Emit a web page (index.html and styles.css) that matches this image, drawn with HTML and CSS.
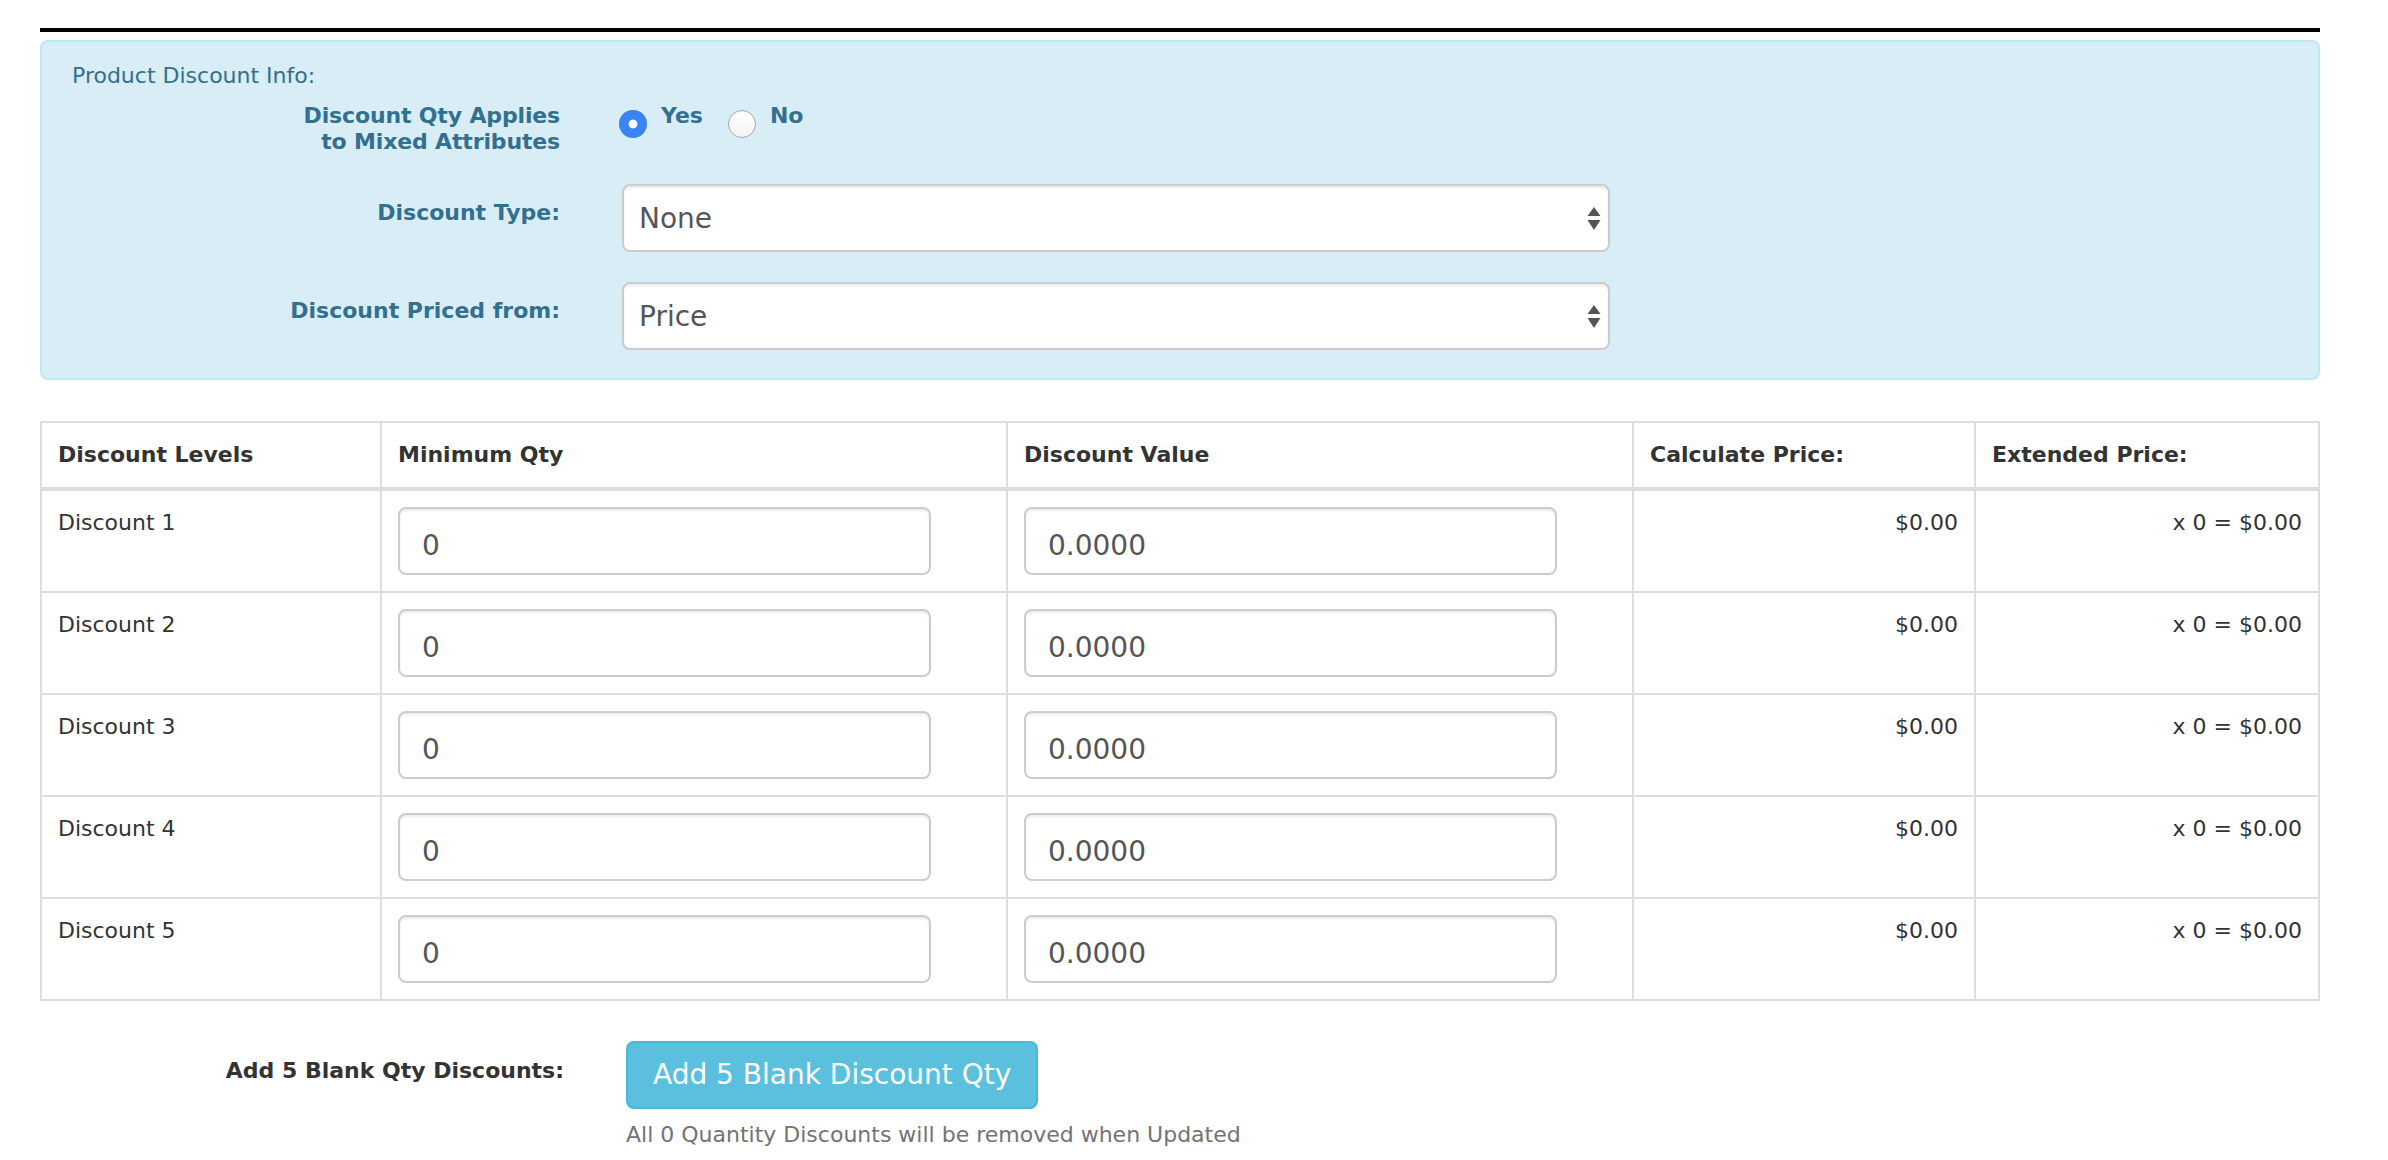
FILE: index.html
```html
<!DOCTYPE html>
<html lang="en">
<head>
<meta charset="utf-8">
<title>Product Discount Info</title>
<link rel="stylesheet" href="styles.css">
</head>
<body>
<div class="page">
  <div class="rule"></div>

  <div class="info-panel">
    <div class="panel-title">Product Discount Info:</div>

    <div class="form-row row-mixed">
      <div class="form-label label-two-line">Discount Qty Applies<br>to Mixed Attributes</div>
      <div class="radios">
        <label class="radio-opt"><input type="radio" name="mixed" checked><span>Yes</span></label>
        <label class="radio-opt"><input type="radio" name="mixed"><span>No</span></label>
      </div>
    </div>

    <div class="form-row">
      <div class="form-label">Discount Type:</div>
      <div class="select-wrap">
        <select class="select-box"><option>None</option></select>
        <svg class="select-arrows" width="14" height="24" viewBox="0 0 14 24"><path d="M7 0 L13.5 9 L0.5 9 Z" fill="#555"/><path d="M0.5 13 L13.5 13 L7 23 Z" fill="#555"/></svg>
      </div>
    </div>

    <div class="form-row row-last">
      <div class="form-label">Discount Priced from:</div>
      <div class="select-wrap">
        <select class="select-box"><option>Price</option></select>
        <svg class="select-arrows" width="14" height="24" viewBox="0 0 14 24"><path d="M7 0 L13.5 9 L0.5 9 Z" fill="#555"/><path d="M0.5 13 L13.5 13 L7 23 Z" fill="#555"/></svg>
      </div>
    </div>
  </div>

  <table class="discount-table">
    <colgroup>
      <col class="col-level">
      <col class="col-min">
      <col class="col-val">
      <col class="col-calc">
      <col class="col-ext">
    </colgroup>
    <thead>
      <tr>
        <th>Discount Levels</th>
        <th>Minimum Qty</th>
        <th>Discount Value</th>
        <th>Calculate Price:</th>
        <th>Extended Price:</th>
      </tr>
    </thead>
    <tbody>
      <tr>
        <td>Discount 1</td>
        <td><input class="text-input" type="text" value="0"></td>
        <td><input class="text-input" type="text" value="0.0000"></td>
        <td class="num">$0.00</td>
        <td class="num">x 0 = $0.00</td>
      </tr>
      <tr>
        <td>Discount 2</td>
        <td><input class="text-input" type="text" value="0"></td>
        <td><input class="text-input" type="text" value="0.0000"></td>
        <td class="num">$0.00</td>
        <td class="num">x 0 = $0.00</td>
      </tr>
      <tr>
        <td>Discount 3</td>
        <td><input class="text-input" type="text" value="0"></td>
        <td><input class="text-input" type="text" value="0.0000"></td>
        <td class="num">$0.00</td>
        <td class="num">x 0 = $0.00</td>
      </tr>
      <tr>
        <td>Discount 4</td>
        <td><input class="text-input" type="text" value="0"></td>
        <td><input class="text-input" type="text" value="0.0000"></td>
        <td class="num">$0.00</td>
        <td class="num">x 0 = $0.00</td>
      </tr>
      <tr>
        <td>Discount 5</td>
        <td><input class="text-input" type="text" value="0"></td>
        <td><input class="text-input" type="text" value="0.0000"></td>
        <td class="num">$0.00</td>
        <td class="num">x 0 = $0.00</td>
      </tr>
    </tbody>
  </table>

  <div class="add-row">
    <div class="add-label">Add 5 Blank Qty Discounts:</div>
    <div class="add-control">
      <button class="btn-info" type="button">Add 5 Blank Discount Qty</button>
      <div class="help-text">All 0 Quantity Discounts will be removed when Updated</div>
    </div>
  </div>
</div>
</body>
</html>
```

FILE: styles.css
```css
* {
  box-sizing: border-box;
}

html, body {
  margin: 0;
  padding: 0;
  background: #fff;
}

body {
  font-family: "DejaVu Sans", Verdana, sans-serif;
  font-size: 22px;
  line-height: 1.42857;
  color: #333;
}

.page {
  width: 2280px;
  margin-left: 40px;
  padding-top: 28px;
}

.rule {
  height: 4px;
  background: #000;
  margin-bottom: 8px;
}

/* info panel */
.info-panel {
  background: #d9edf7;
  border: 2px solid #bce8f1;
  border-radius: 8px;
  padding: 18px 30px 28px 30px;
  color: #31708f;
}

.panel-title {
  margin-bottom: 12px;
}

.form-row {
  display: flex;
  gap: 59px;
  margin-bottom: 30px;
}

.row-mixed {
  margin-bottom: 29px;
}

.row-last {
  margin-bottom: 0;
}

.form-label {
  width: 488px;
  flex: none;
  text-align: right;
  font-weight: bold;
  padding-top: 13px;
}

.label-two-line {
  padding-top: 0;
  line-height: 26px;
  letter-spacing: -0.15px;
}

.radios {
  display: flex;
  gap: 25px;
}

.radio-opt {
  display: flex;
  align-items: flex-start;
  gap: 14px;
  font-weight: bold;
  line-height: 26px;
}

.radio-opt input {
  -webkit-appearance: none;
  appearance: none;
  width: 28px;
  height: 28px;
  margin: 7px 0 0 0;
  border-radius: 50%;
  border: 1px solid #a9a9a9;
  background: linear-gradient(#fff, #f4f4f4);
  box-shadow: inset 0 1px 1px rgba(0, 0, 0, 0.05);
  flex: none;
}

.radio-opt input:checked {
  border: none;
  background: radial-gradient(circle, #fff 0, #fff 4px, #3b84f5 4.8px);
}

.select-wrap {
  position: relative;
  width: 988px;
  margin-left: 3px;
}

.select-box {
  -webkit-appearance: none;
  appearance: none;
  display: block;
  width: 100%;
  height: 68px;
  padding: 0 40px 0 15px;
  font-family: "DejaVu Sans", Verdana, sans-serif;
  font-size: 28px;
  color: #555;
  background: #fff;
  border: 2px solid #ccc;
  border-radius: 8px;
  box-shadow: inset 0 2px 2px rgba(0, 0, 0, 0.075);
}

.select-arrows {
  position: absolute;
  right: 9px;
  top: 23px;
}

/* table */
.discount-table {
  width: 2280px;
  margin-top: 41px;
  border-collapse: collapse;
  table-layout: fixed;
  border: 2px solid #ddd;
}

.col-level { width: 340px; }
.col-min { width: 626px; }
.col-val { width: 626px; }
.col-calc { width: 342px; }

.discount-table th,
.discount-table td {
  padding: 16px;
  border: 2px solid #ddd;
  text-align: left;
  vertical-align: top;
  font-weight: normal;
}

.discount-table th {
  font-weight: bold;
  vertical-align: bottom;
  border-bottom-width: 4px;
}

.discount-table td.num {
  text-align: right;
}

.text-input {
  display: block;
  width: 533px;
  height: 68px;
  padding: 9px 22px 0 22px;
  font-family: "DejaVu Sans", Verdana, sans-serif;
  font-size: 28px;
  color: #555;
  background: #fff;
  border: 2px solid #ccc;
  border-radius: 8px;
  box-shadow: inset 0 2px 2px rgba(0, 0, 0, 0.075);
}

/* add row */
.add-row {
  display: flex;
  gap: 62px;
  margin-top: 40px;
}

.add-label {
  width: 524px;
  flex: none;
  text-align: right;
  font-weight: bold;
  color: #333;
  padding-top: 14px;
}

.add-control {
  display: flex;
  flex-direction: column;
  align-items: flex-start;
}

.btn-info {
  font-family: "DejaVu Sans", Verdana, sans-serif;
  font-size: 28px;
  line-height: 40px;
  color: #fff;
  background: #5bc0de;
  border: 2px solid #46b8da;
  border-radius: 8px;
  padding: 12px 25px;
}

.help-text {
  margin-top: 10px;
  color: #737373;
}
```
